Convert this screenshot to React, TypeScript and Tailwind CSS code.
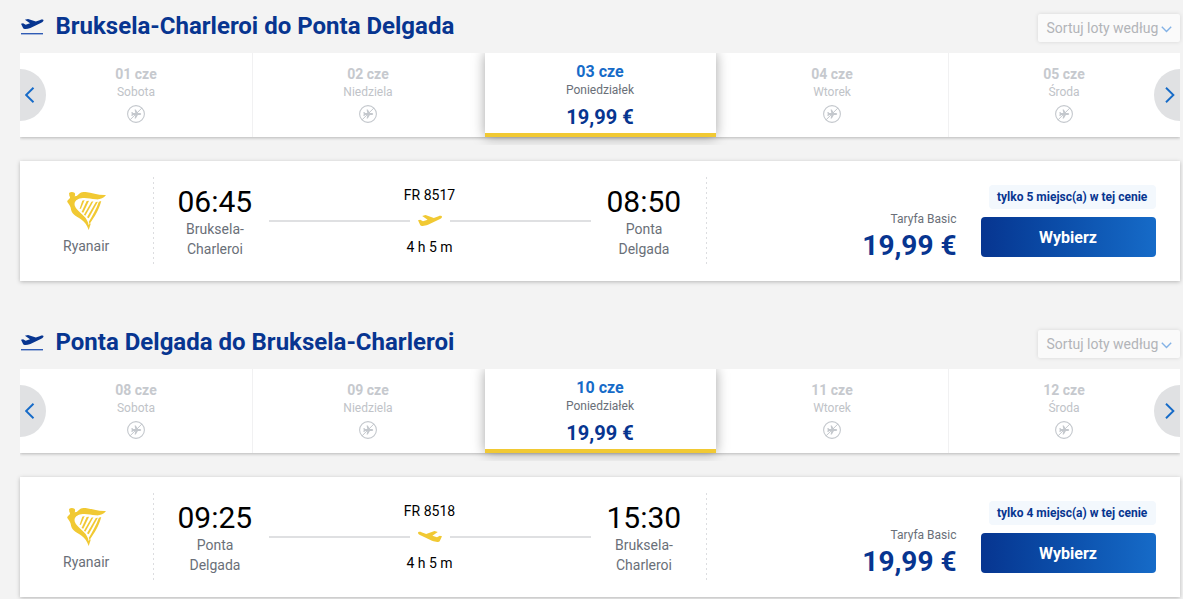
type Day = { date: string; name: string; price?: string }

type Flight = {
  title: string
  days: Day[]
  number: string
  duration: string
  departure: string
  arrival: string
  from: [string, string]
  to: [string, string]
  seats: number
  inbound?: boolean
}

const flights: Flight[] = [
  {
    title: "Bruksela-Charleroi do Ponta Delgada",
    days: [
      { date: "01 cze", name: "Sobota" },
      { date: "02 cze", name: "Niedziela" },
      { date: "03 cze", name: "Poniedziałek", price: "19,99 €" },
      { date: "04 cze", name: "Wtorek" },
      { date: "05 cze", name: "Środa" },
    ],
    number: "FR 8517",
    duration: "4 h 5 m",
    departure: "06:45",
    arrival: "08:50",
    from: ["Bruksela-", "Charleroi"],
    to: ["Ponta", "Delgada"],
    seats: 5,
  },
  {
    title: "Ponta Delgada do Bruksela-Charleroi",
    days: [
      { date: "08 cze", name: "Sobota" },
      { date: "09 cze", name: "Niedziela" },
      { date: "10 cze", name: "Poniedziałek", price: "19,99 €" },
      { date: "11 cze", name: "Wtorek" },
      { date: "12 cze", name: "Środa" },
    ],
    number: "FR 8518",
    duration: "4 h 5 m",
    departure: "09:25",
    arrival: "15:30",
    from: ["Ponta", "Delgada"],
    to: ["Bruksela-", "Charleroi"],
    seats: 4,
    inbound: true,
  },
]

const planePath =
  "M0 5.2L2.2 4.7L5 6.2L9.6 4.8L4.2 .9L7.5 .1L15.8 3L20.5 1.2C22.5 .5 24.3 .9 23.9 2.2C23.6 3.1 22.5 3.8 21 4.5L10 9.8C6 11.3 3 11.3 2.2 9.9Z"

function TakeoffIcon() {
  return (
    <svg width="24" height="18" viewBox="0 0 24 18" className="text-[#073590]">
      <path d={planePath} fill="currentColor" transform="translate(1 .8) scale(.94)" />
      <rect x="1" y="15" width="22" height="1.4" fill="#2f5bb5" />
    </svg>
  )
}

function PlaneIcon({ flipped }: { flipped?: boolean }) {
  return (
    <svg width="24" height="12" viewBox="0 0 24 12" className={flipped ? "-scale-x-100" : ""}>
      <path d={planePath} fill="#f1c933" />
    </svg>
  )
}

function NoFlightIcon() {
  return (
    <svg width="18" height="18" viewBox="0 0 18 18" fill="none" stroke="#c4c8cd">
      <circle cx="9" cy="9" r="8.4" strokeWidth="1.1" />
      <path
        d="M4.4 7L5.3 7L6.2 8.1L8.3 8.1L7.6 4.6L8.8 4.6L10.9 8.1L13.4 8.1Q15.2 9 13.4 9.9L10.9 9.9L8.8 13.4L7.6 13.4L8.3 9.9L6.2 9.9L5.3 11L4.4 11L4.7 9Z"
        fill="#c4c8cd"
        stroke="none"
      />
      <path d="M3 14.9L14.9 3" strokeWidth="1" />
    </svg>
  )
}

function HarpLogo() {
  return (
    <svg width="39" height="38" viewBox="20 24 115 114" preserveAspectRatio="none" fill="#f1c933">
      <path d="M26 27Q34 21 43 27Q45 34 42 37Q50 37 56 29Q62 23 75 24C94 27 112 34 135 33C128 43 117 47 105 46C89 45 76 40 62 43C47 46 40 54 43 65C48 79 65 89 75 102C80 110 83 117 84 124L87 117L90 119L84 138C79 124 73 114 63 107C50 97 35 92 32 77C31 68 27 63 21 54Q19 50 27 44Q31 41 27 36Z" />
      <path d="M65 50L72 48L61 74L57 75Z" />
      <path d="M78 51L85 50L68 86L63 84Z" />
      <path d="M92 53L98 52L74 95L70 92Z" />
      <path d="M105 54L111 53L84 103L79 100Z" />
      <path d="M114 53L121 51C114 78 102 97 87 119L84 114C95 94 106 76 114 53Z" />
    </svg>
  )
}

function Chevron({ right }: { right?: boolean }) {
  return (
    <svg width="10" height="16" viewBox="0 0 10 16" fill="none" stroke="#166bc8" strokeWidth="1.9">
      <path d={right ? "M1 .7L8.4 8L1 15.3" : "M8.5 .7L1.1 8L8.5 15.3"} />
    </svg>
  )
}

function DayTab({ day, divided }: { day: Day; divided: boolean }) {
  if (day.price) {
    return (
      <div className="z-10 ml-px w-[231px] border-b-4 border-[#f1c933] bg-white pt-[9px] pr-px text-center shadow-[0_0_12px_rgba(0,0,0,0.36)]">
        <div className="text-[16px] leading-5 font-bold text-[#166bc8]">{day.date}</div>
        <div className="text-[12px] leading-4 text-[#6a6f78]">{day.name}</div>
        <div className="mt-[7px] text-[20px] leading-6 font-bold text-[#073590]">{day.price}</div>
      </div>
    )
  }
  return (
    <div className={`flex w-[232px] flex-col items-center pt-3 ${divided ? "border-l border-[#f1f1f2] pr-px" : ""}`}>
      <div className="text-[14px] leading-[18px] font-bold text-[#c6c9ce]">{day.date}</div>
      <div className="mt-px text-[12px] leading-4 text-[#c0c3c8]">{day.name}</div>
      <div className="mt-[5px]">
        <NoFlightIcon />
      </div>
    </div>
  )
}

function Airport({ time, lines }: { time: string; lines: [string, string] }) {
  return (
    <div className="w-[74px] text-center whitespace-nowrap">
      <div className="-ml-[0.5px] pt-px text-[30px] leading-9 text-black">{time}</div>
      <div className="-mt-px text-[14px] leading-5 text-[#6a6f78]">
        <div>{lines[0]}</div>
        <div>{lines[1]}</div>
      </div>
    </div>
  )
}

function DottedLine() {
  return (
    <div className="h-[88px] w-px bg-[repeating-linear-gradient(to_bottom,#dcdde0_0px,#dcdde0_2px,transparent_2px,transparent_5px)]" />
  )
}

function FlightSection({ flight }: { flight: Flight }) {
  return (
    <section className="h-[316px]">
      {/* Title and sorting */}
      <div className="flex h-[53px] items-start justify-between">
        <div className="flex items-start">
          <div className="pt-[18px]">
            <TakeoffIcon />
          </div>
          <h2 className="ml-[11.5px] pt-3 text-[24px] leading-7 font-bold text-[#073590]">{flight.title}</h2>
        </div>
        <button className="mt-[14px] flex h-7 w-[142px] items-center rounded-[2px] bg-[#fafafa] pl-[8.5px] text-[14px] whitespace-nowrap text-[#b2b4b8] shadow-[0_0_4px_rgba(0,0,0,0.12)]">
          Sortuj loty według
          <svg width="11" height="7" viewBox="0 0 11 7" fill="none" stroke="#83b2e6" strokeWidth="1.4" className="mt-[2px] ml-[3px]">
            <path d="M.8 .8L5.5 5.4L10.2 .8" />
          </svg>
        </button>
      </div>

      {/* Day carousel */}
      <div className="relative h-[84px] shadow-[0_1px_3px_rgba(0,0,0,0.25)] [clip-path:inset(0_0_-8px_0)]">
        <div className="flex h-full bg-white">
          {flight.days.map((day, i) => (
            <DayTab key={day.date} day={day} divided={i === 1 || i === 4} />
          ))}
        </div>
        <button className="absolute top-4 left-0 z-20 flex h-[52px] w-[26px] items-center rounded-r-full bg-[#e0e1e3] pl-[5px]">
          <Chevron />
        </button>
        <button className="absolute top-4 right-0 z-20 flex h-[52px] w-[26px] items-center rounded-l-full bg-[#e0e1e3] pl-[11px]">
          <Chevron right />
        </button>
      </div>

      {/* Flight card */}
      <div className="mt-6 flex h-[120px] bg-white pt-4 shadow-[0_1px_4px_rgba(0,0,0,0.25)]">
        <div className="flex w-[132px] flex-col items-center pt-[15px]">
          <HarpLogo />
          <div className="mt-[6px] pl-[0.5px] text-[14px] leading-5 text-[#6a6f78]">Ryanair</div>
        </div>
        <div className="ml-px">
          <DottedLine />
        </div>
        <div className="flex w-[552px] pt-[6px] pl-6">
          <Airport time={flight.departure} lines={flight.from} />
          <div className="mr-4 ml-[17px] flex w-[322px] flex-col items-center text-[14px] leading-5 text-black">
            <div className="mt-[2px] -ml-px">{flight.number}</div>
            <div className="my-[5px] flex h-[22px] w-full items-center gap-2">
              <div className="h-[2px] flex-1 bg-[#dfe0e2]" />
              <PlaneIcon flipped={flight.inbound} />
              <div className="h-[2px] flex-1 bg-[#dfe0e2]" />
            </div>
            <div className="-ml-px">{flight.duration}</div>
          </div>
          <Airport time={flight.arrival} lines={flight.to} />
        </div>
        <DottedLine />
        <div className="flex flex-1 justify-end gap-6 pt-2 pr-6">
          <div className="pt-[26px] pr-[0.5px] text-right">
            <div className="text-[12px] leading-4 text-[#6a6f78]">Taryfa Basic</div>
            <div className="mt-[3px] text-[28px] leading-8 font-bold text-[#073590]">19,99 €</div>
          </div>
          <div className="flex w-[175px] flex-col items-end">
            <div className="w-[167px] rounded bg-[#f3f8fd] pl-2 text-[12px] leading-6 font-bold whitespace-nowrap text-[#073590]">
              tylko {flight.seats} miejsc(a) w tej cenie
            </div>
            <button className="mt-2 h-10 w-full rounded bg-linear-to-r from-[#073590] to-[#166bc8] pt-px pr-px text-[16px] font-bold text-white">
              Wybierz
            </button>
          </div>
        </div>
      </div>
    </section>
  )
}

export default function App() {
  return (
    <main className="h-[599px] w-[1183px] overflow-hidden bg-[#f3f3f3] pr-[3px] pl-5 font-['Roboto',sans-serif]">
      {flights.map((flight) => (
        <FlightSection key={flight.title} flight={flight} />
      ))}
    </main>
  )
}
